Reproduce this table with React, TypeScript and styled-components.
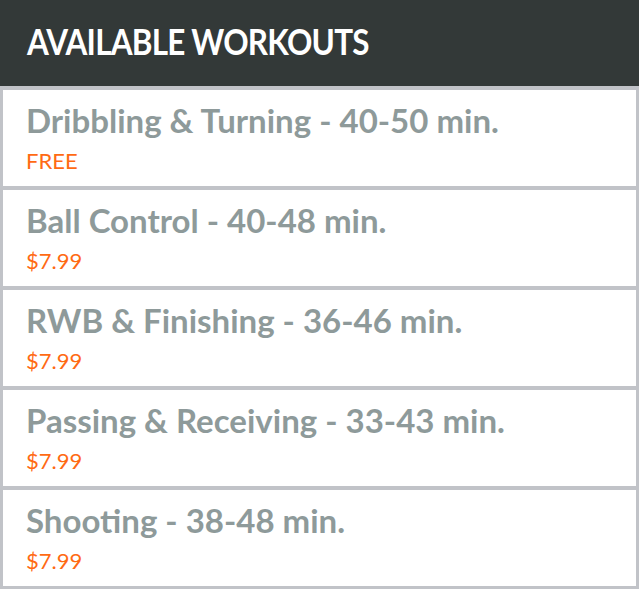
import React from 'react'
import styled, { createGlobalStyle } from 'styled-components'

const GlobalStyle = createGlobalStyle`
  html, body {
    margin: 0;
    padding: 0;
    background: #ffffff;
  }
`

const Page = styled.div`
  width: 639px;
  height: 589px;
  overflow: hidden;
  font-family: Lato, 'Noto Sans', sans-serif;
`

const Header = styled.div`
  height: 86px;
  background: #333938;
  padding: 22px 0 0 27px;
  box-sizing: border-box;
`

// the original face is a narrow geometric sans, so Lato is squeezed a little
const HeaderTitle = styled.h1`
  margin: 0;
  color: #ffffff;
  font-size: 37px;
  font-weight: 700;
  letter-spacing: -0.9px;
  line-height: 37px;
  white-space: nowrap;
  transform: scaleX(0.85);
  transform-origin: left center;
`

const List = styled.div`
  display: flex;
  flex-direction: column;
  gap: 4px;
  background: #c1c3c8;
  padding: 4px 3px 3px;
`

const Card = styled.div`
  height: 96px;
  background: #ffffff;
  padding: 12px 0 0 23px;
  box-sizing: border-box;
  display: flex;
  flex-direction: column;
`

const Title = styled.div`
  color: #8e9a9a;
  font-size: 33px;
  font-weight: 700;
  line-height: 36px;
`

const Price = styled.div`
  color: #ff6a13;
  font-size: 22px;
  font-weight: 400;
  line-height: 26px;
  margin-top: 10px;
`

interface Workout {
  title: string
  price: string
}

const workouts: Workout[] = [
  { title: 'Dribbling & Turning - 40-50 min.', price: 'FREE' },
  { title: 'Ball Control - 40-48 min.', price: '$7.99' },
  { title: 'RWB & Finishing - 36-46 min.', price: '$7.99' },
  { title: 'Passing & Receiving - 33-43 min.', price: '$7.99' },
  { title: 'Shooting - 38-48 min.', price: '$7.99' },
]

const App: React.FC = () => {
  return (
    <Page>
      <GlobalStyle />
      <Header>
        <HeaderTitle>AVAILABLE WORKOUTS</HeaderTitle>
      </Header>
      <List>
        {workouts.map((workout) => (
          <Card key={workout.title}>
            <Title>{workout.title}</Title>
            <Price>{workout.price}</Price>
          </Card>
        ))}
      </List>
    </Page>
  )
}

export default App
